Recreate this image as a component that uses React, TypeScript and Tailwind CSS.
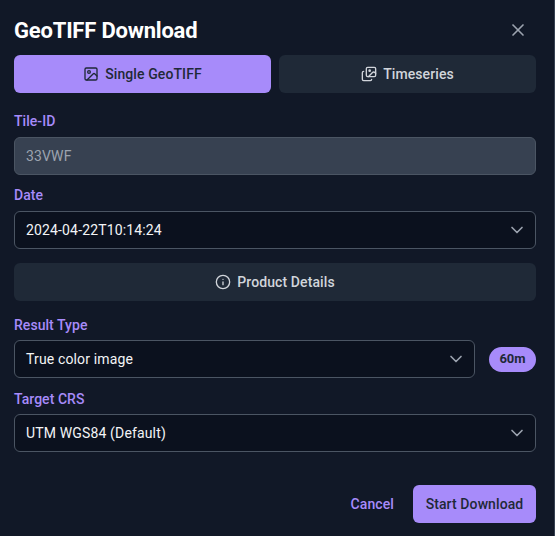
import { ChevronDown, Image, Images, Info, X } from "lucide-react";

function Label({ children }: { children: string }) {
  return <div className="text-sm leading-5 font-medium tracking-[0.05px] text-[#a78bfa]">{children}</div>;
}

function SelectBox({ value, className = "" }: { value: string; className?: string }) {
  return (
    <div className={`flex h-[38px] items-center justify-between rounded-md border border-[#4b5563] bg-[#0b111e] pl-[11px] pr-2 text-sm tracking-[0.15px] text-[#f3f4f6] ${className}`}>
      <span>{value}</span>
      <ChevronDown size={20} className="text-[#9ca3af]" />
    </div>
  );
}

export default function App() {
  return (
    <div className="h-[536px] w-[555px] overflow-hidden border-r border-[#374151] bg-[#111827] font-['Roboto',sans-serif]">
      <div className="flex flex-col px-[14px] pr-[18px]">
        <div className="flex h-[55px] items-center justify-between pt-[5px]">
          <h2 className="text-[22px] font-bold tracking-[-0.2px] text-white">GeoTIFF Download</h2>
          <X size={20} className="mr-2 text-[#9ca3af]" />
        </div>

        <div className="grid grid-cols-2 gap-2">
          <button className="flex h-[38px] items-center justify-center gap-1.5 rounded-md bg-[#a78bfa] text-sm font-medium tracking-[0.1px] text-[#1f2937]">
            <Image size={16} />
            Single GeoTIFF
          </button>
          <button className="flex h-[38px] items-center justify-center gap-1.5 rounded-md bg-[#1f2937] text-sm font-medium tracking-[0.1px] text-[#d1d5db]">
            <Images size={16} />
            Timeseries
          </button>
        </div>

        <div className="mt-[18px]"><Label>Tile-ID</Label></div>
        <div className="mt-[6px] flex h-[38px] items-center rounded-md border border-[#4b5563] bg-[#374151] px-[11px] text-sm tracking-[0.15px] text-[#9ca3af]">33VWF</div>

        <div className="mt-[10px]"><Label>Date</Label></div>
        <SelectBox value="2024-04-22T10:14:24" className="mt-[6px]" />

        <button className="mt-[14px] flex h-[38px] items-center justify-center gap-1.5 rounded-md bg-[#1f2937] text-sm font-medium tracking-[0.1px] text-[#d1d5db]">
          <Info size={16} />
          Product Details
        </button>

        <div className="mt-[14px]"><Label>Result Type</Label></div>
        <div className="mt-[5px] flex items-center gap-[14px]">
          <SelectBox value="True color image" className="flex-1" />
          <span className="flex h-[25px] w-[47px] items-center justify-center rounded-full bg-[#a78bfa] text-[13px] font-bold text-[#1f2937]">60m</span>
        </div>

        <div className="mt-[11px]"><Label>Target CRS</Label></div>
        <SelectBox value="UTM WGS84 (Default)" className="mt-[5px]" />

        <div className="mt-[33px] flex items-center justify-end gap-[19px]">
          <button className="text-sm font-medium tracking-[0.1px] text-[#a78bfa]">Cancel</button>
          <button className="h-[38px] w-[123px] rounded-md bg-[#a78bfa] text-sm font-medium tracking-[0.1px] text-[#1f2937]">Start Download</button>
        </div>
      </div>
    </div>
  );
}
